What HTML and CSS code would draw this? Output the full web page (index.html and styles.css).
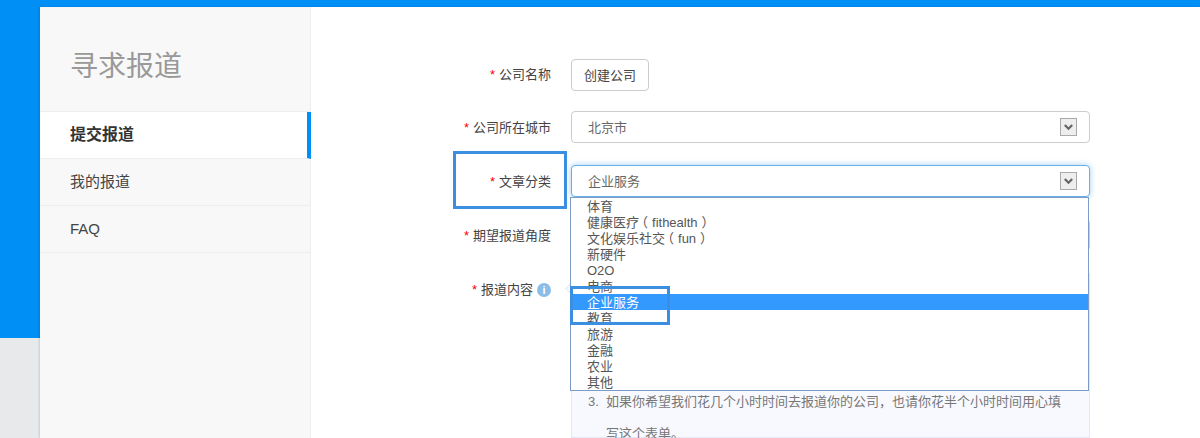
FILE: index.html
```html
<!DOCTYPE html>
<html lang="zh-CN">
<head>
<meta charset="utf-8">
<title>寻求报道</title>
<link rel="stylesheet" href="styles.css">
</head>
<body>
<div class="card">
  <aside class="side">
    <h1 class="side-title">寻求报道</h1>
    <nav>
      <a class="nav-item active">提交报道</a>
      <a class="nav-item">我的报道</a>
      <a class="nav-item">FAQ</a>
    </nav>
  </aside>
  <main class="main">
    <div class="row row-first">
      <label class="label"><span class="req">*</span>公司名称</label>
      <div class="control"><button class="btn">创建公司</button></div>
    </div>
    <div class="row">
      <label class="label"><span class="req">*</span>公司所在城市</label>
      <div class="control">
        <div class="select"><span class="value">北京市</span>
          <span class="arrow"><svg width="9" height="7" viewBox="0 0 9 7"><path d="M.8 1 4.5 4.7 8.2 1" fill="none" stroke="#666" stroke-width="2.2"/></svg></span>
        </div>
      </div>
    </div>
    <div class="row row-wide">
      <label class="label mark-host"><span class="req">*</span>文章分类<span class="mark mark-label"></span></label>
      <div class="control">
        <div class="select focus"><span class="value">企业服务</span>
          <span class="arrow"><svg width="9" height="7" viewBox="0 0 9 7"><path d="M.8 1 4.5 4.7 8.2 1" fill="none" stroke="#666" stroke-width="2.2"/></svg></span>
          <ul class="dropdown">
            <li>体育</li>
            <li>健康医疗<span class="paren-open">（</span>fithealth<span class="paren-close">）</span></li>
            <li>文化娱乐社交<span class="paren-open">（</span>fun<span class="paren-close">）</span></li>
            <li>新硬件</li>
            <li>O2O</li>
            <li>电商</li>
            <li class="selected">企业服务</li>
            <li>教育</li>
            <li>旅游</li>
            <li>金融</li>
            <li>农业</li>
            <li>其他</li>
            <li class="mark mark-option"></li>
          </ul>
        </div>
      </div>
    </div>
    <div class="row row-wide">
      <label class="label"><span class="req">*</span>期望报道角度</label>
      <div class="control"><div class="select"></div></div>
    </div>
    <div class="row row-wide row-top">
      <label class="label label-info"><span class="req">*</span>报道内容<span class="info">i</span></label>
      <div class="control">
        <div class="notes">
          <span class="notes-tip"></span>
          <div class="note"><span class="note-num">3.</span><span class="note-text">如果你希望我们花几个小时时间去报道你的公司，也请你花半个小时时间用心填写这个表单。</span></div>
        </div>
      </div>
    </div>
  </main>
</div>
</body>
</html>
```

FILE: styles.css
```css
* { box-sizing: border-box; }
html, body { height: 100%; }
body {
  margin: 0;
  height: 438px;
  overflow: hidden;
  padding: 7px 0 0 40px;
  background: linear-gradient(#008ff5 0, #008ff5 338px, #e8e9eb 338px);
  font-family: "Liberation Sans", "Noto Sans CJK SC", sans-serif;
  font-size: 13px;
  color: #333;
}
.card {
  display: flex;
  height: 431px;
  background: #fff;
  box-shadow: -1px 0 2px rgba(0, 0, 0, .12);
}
.side {
  width: 271px;
  flex: none;
  background: #f8f8f8;
  border-right: 1px solid #eee;
}
.side-title {
  margin: 0;
  height: 105px;
  padding: 39px 0 0 30px;
  font-size: 28px;
  font-weight: 400;
  line-height: 42px;
  color: #999;
  border-bottom: 1px solid #eee;
}
.nav-item {
  display: block;
  height: 47px;
  padding-left: 30px;
  font-size: 15px;
  line-height: 46px;
  color: #444;
  border-bottom: 1px solid #eee;
}
.nav-item.active {
  width: 271px;
  font-size: 16px;
  font-weight: 700;
  color: #333;
  background: #fff;
  border-right: 4px solid #008ff5;
}
.main {
  flex: 1;
  padding-top: 52px;
}
.row {
  display: grid;
  grid-template-columns: 240px 519px;
  column-gap: 20px;
  align-items: center;
  margin-top: 20px;
}
.row-first { margin-top: 0; }
.row-wide { margin-top: 22px; }
.row-top { align-items: start; }
.label {
  position: relative;
  height: 32px;
  text-align: right;
  line-height: 34px;
  color: #444;
}
.row-first .label { line-height: 31px; }
.req {
  color: #f00;
  margin-right: 4px;
}
.control { min-width: 0; }
.btn {
  width: 78px;
  height: 32px;
  padding: 0 0 2px;
  font: inherit;
  color: #444;
  background: #fff;
  border: 1px solid #ccc;
  border-radius: 4px;
}
.select {
  position: relative;
  display: flex;
  justify-content: space-between;
  align-items: center;
  height: 32px;
  padding: 0 12px 0 16px;
  color: #666;
  background: #fff;
  border: 1px solid #ccc;
  border-radius: 4px;
}
.select.focus {
  border-color: #66afe9;
  box-shadow: 0 0 6px rgba(102, 175, 233, .6);
}
.value { margin-bottom: 2px; }
.arrow {
  display: flex;
  justify-content: center;
  align-items: center;
  width: 17px;
  height: 18px;
  background: #eee;
  border: 1px solid #aaa;
}
.dropdown {
  position: absolute;
  z-index: 2;
  top: 31px;
  left: -2px;
  width: 519px;
  margin: 0;
  padding: 0;
  list-style: none;
  background: #fff;
  border: 1px solid #7a9cc6;
  color: #555;
}
.dropdown li {
  height: 16px;
  padding-left: 16px;
  line-height: 18px;
}
.dropdown li.selected {
  color: #fff;
  background: #39f;
}
.paren-open { margin: 0 4px 0 -4px; }
.paren-close { margin: 0 -4px 0 4px; }
.mark {
  position: absolute;
  border: 3px solid #3b8fe0;
}
.mark-label {
  top: -14px;
  left: 142px;
  width: 114px;
  height: 58px;
}
.dropdown li.mark-option {
  top: 88px;
  left: -1px;
  width: 100px;
  height: 39px;
  padding: 0;
}
.label-info {
  padding-right: 18px;
}
.info {
  position: absolute;
  top: 10px;
  right: 0;
  width: 14px;
  height: 14px;
  border-radius: 50%;
  background: #8bbde8;
  color: #fff;
  font-size: 11px;
  font-weight: 700;
  line-height: 14px;
  text-align: center;
}
.notes {
  position: relative;
  height: 165px;
  padding: 112px 18px 0 16px;
  background: #f7f9fe;
  border: 1px solid #e4e8f6;
  color: #777;
  line-height: 32px;
}
.notes-tip {
  position: absolute;
  top: 10px;
  left: -5px;
  width: 9px;
  height: 9px;
  transform: rotate(45deg);
  background: #f7f9fe;
  border-left: 1px solid #e4e8f6;
  border-bottom: 1px solid #e4e8f6;
}
.note { display: flex; }
.note-num { flex: none; width: 18px; }
.note-text { width: 458px; }
```
